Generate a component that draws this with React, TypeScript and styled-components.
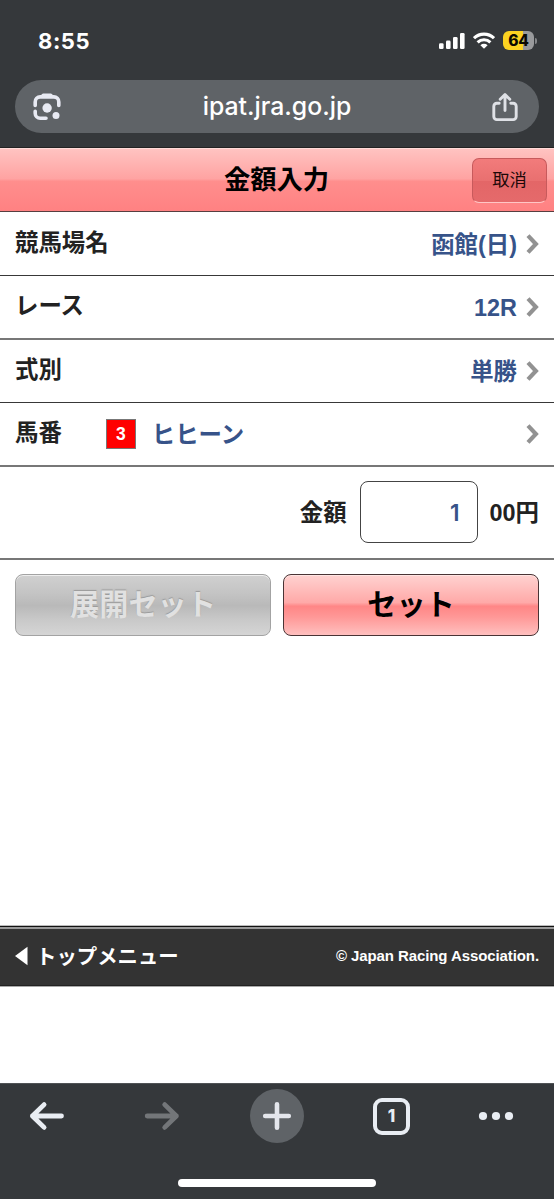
import React from "react";
import styled, { createGlobalStyle } from "styled-components";

const jp = `"Liberation Sans", "Noto Sans CJK JP", sans-serif`;
const ui = `Inter, "Noto Sans CJK JP", sans-serif`;

const GlobalStyle = createGlobalStyle`
  * { box-sizing: border-box; }
  body { margin: 0; background: #fff; font-family: ${jp}; }
`;

const Screen = styled.div`
  width: 554px;
  height: 1199px;
  display: flex;
  flex-direction: column;
  overflow: hidden;
  background: #fff;
`;

const BrowserTop = styled.header`
  height: 148px;
  flex: none;
  background: #35383b;
  border-bottom: 1px solid #222;
  padding: 0 15px;
`;

const StatusBar = styled.div`
  height: 80px;
  padding: 1px 2px 0 23px;
  display: flex;
  align-items: center;
  justify-content: space-between;
`;

const Clock = styled.span`
  font: 700 22px/28px ${ui};
  letter-spacing: 0.6px;
  color: #fff;
`;

const StatusIcons = styled.div`
  display: flex;
  align-items: center;
  gap: 8px;
  height: 20px;
`;

const Battery = styled.div`
  display: flex;
  align-items: center;
  gap: 1px;
`;

const BatteryBody = styled.div`
  width: 31px;
  height: 19px;
  border-radius: 6px;
  background: linear-gradient(90deg, #fcd321 64%, #999a9c 64%);
  font: 800 15.5px/19px ${ui};
  letter-spacing: -0.1px;
  text-align: center;
  color: #0b0a02;
`;

const BatteryTip = styled.div`
  width: 2px;
  height: 6px;
  border-radius: 0 2px 2px 0;
  background: #85878a;
`;

const AddressBar = styled.div`
  height: 53px;
  border-radius: 27px;
  background: #5f6367;
  padding: 0 19px 0 16px;
  display: flex;
  align-items: center;
  justify-content: space-between;
`;

const Url = styled.span`
  font: 500 24.8px/30px ${ui};
  letter-spacing: 0;
  color: #fff;
  padding: 0 1px 1px 2px;
`;

const TitleBar = styled.div`
  height: 64px;
  flex: none;
  display: grid;
  grid-template-columns: 1fr auto 1fr;
  align-items: center;
  background: linear-gradient(#ffc3c1 0%, #ffa3a2 48%, #ff8e8d 52%, #ff8182 100%);
  border-top: 1px solid #ffdcd9;
  border-bottom: 1px solid #573f40;
  padding-right: 7px;
`;

const Title = styled.h1`
  grid-column: 2;
  margin: 0 0 0 6px;
  font: 700 26.3px/40px ${jp};
  color: #000;
`;

const CancelButton = styled.button`
  justify-self: end;
  width: 75px;
  height: 45px;
  padding: 0 0 1px;
  border: 1px solid #c75a5c;
  border-bottom-color: #ffc6c5;
  border-radius: 7px;
  background: linear-gradient(#f27b7b 0%, #e97070 50%, #e36667 52%, #e56a6b 100%);
  font: 400 17.3px/30px ${jp};
  color: #1c0808;
`;

const Row = styled.div<{ $thick?: boolean; $height: number }>`
  height: ${(p) => p.$height}px;
  flex: none;
  display: flex;
  align-items: center;
  padding: 0 15px;
  border-bottom: ${(p) => (p.$thick ? "2px solid #777" : "1px solid #383838")};
`;

const Label = styled.span`
  font: 700 23.4px/34px ${jp};
  color: #222;
  padding-bottom: 2px;
`;

const Value = styled.span`
  margin-left: auto;
  padding-top: 2px;
  font: 700 23.4px/34px ${jp};
  color: #375389;
`;

const HorseNumber = styled.span`
  width: 30px;
  height: 30px;
  margin: 0 16px 0 44px;
  border: 1px solid #777;
  background: #f00;
  color: #fff;
  font: 700 17.5px/28px ${jp};
  text-align: center;
`;

const HorseName = styled(Value)`
  margin: 0 auto 0 0;
`;

const Chevron = styled.svg`
  width: 13px;
  height: 20px;
  margin-left: 9px;
  flex: none;
`;

const AmountRow = styled(Row)`
  justify-content: flex-end;
  padding-bottom: 2px;
`;

const AmountText = styled.span`
  font: 700 23.4px/34px ${jp};
  padding-top: 2px;
  color: #222;
`;

const AmountInput = styled.input`
  width: 118px;
  height: 62px;
  margin: 0 12px 0 13px;
  padding: 2px 17px 0 8px;
  border: 1px solid #444;
  border-radius: 8px;
  background: #fff;
  text-align: right;
  font: 600 22.5px/30px ${ui};
  color: #375389;
  outline: none;
`;

const Actions = styled.div`
  display: flex;
  gap: 12px;
  padding: 14px 15px 0;
`;

const ActionButton = styled.button<{ $muted?: boolean }>`
  flex: 1;
  height: 62px;
  padding: 0;
  border-radius: 8px;
  border: 1px solid ${(p) => (p.$muted ? "#a3a3a3" : "#4a3435")};
  background: ${(p) =>
    p.$muted
      ? "linear-gradient(#d0d0d0 0%, #c4c4c4 30%, #b9b9b9 51%, #c9c9c9 75%, #d5d5d5 100%)"
      : "linear-gradient(#ffd2d0 0%, #ffa9a8 46%, #ff8686 52%, #ff9897 70%, #ffc0bf 100%)"};
  box-shadow: inset 0 1px 0 ${(p) => (p.$muted ? "#ededed" : "#ffe5e3")};
  font: 700 29.2px/42px ${jp};
  color: ${(p) => (p.$muted ? "#e1e1e1" : "#000")};
  text-shadow: ${(p) => (p.$muted ? "0 -1px 1px #999" : "none")};
`;

const PageFooter = styled.footer`
  margin-top: auto;
  height: 62px;
  flex: none;
  display: flex;
  align-items: center;
  padding: 0 15px;
  background: linear-gradient(#bbb 1px, #111 1px 2px, #999 2px 4px, #333 4px 60px, #222 60px 61px, #aaa 61px);
  color: #fff;
`;

const MenuLink = styled.span`
  margin-left: 8px;
  padding-top: 2px;
  font: 700 20.4px/30px ${jp};
`;

const Copyright = styled.span`
  margin-left: auto;
  font: 700 15px/20px ${jp};
  letter-spacing: -0.09px;
`;

const BackTriangle = styled.svg`
  width: 13px;
  height: 20px;
`;

const BrowserBottom = styled.nav`
  height: 116px;
  flex: none;
  margin-top: 96px;
  background: #35383b;
  border-top: 1px solid #505356;
  display: flex;
  flex-direction: column;
  align-items: center;
`;

const Tools = styled.div`
  width: 554px;
  height: 64px;
  display: grid;
  grid-template-columns: 94px 136px 94px 135px 74px;
  align-items: center;
  justify-items: center;
`;

const NewTab = styled.div`
  width: 54px;
  height: 54px;
  border-radius: 50%;
  background: #5f6367;
  display: grid;
  place-items: center;
`;

const TabCount = styled.div`
  width: 37px;
  height: 37px;
  border: 4px solid #e9edf3;
  border-radius: 9px;
  font: 800 17px/29px ${ui};
  text-align: center;
  color: #e9edf3;
`;

const HomeIndicator = styled.div`
  width: 198px;
  height: 8px;
  margin-top: 31px;
  border-radius: 4px;
  background: #fff;
`;

const Arrow = () => (
  <Chevron viewBox="0 0 13 20">
    <path d="M2 1.6 9.9 10 2 18.4" fill="none" stroke="#929292" strokeWidth="4.2" />
  </Chevron>
);

const Signal = () => (
  <svg width="26" height="16" viewBox="0 0 26 16" fill="#fff">
    <rect x="0" y="10.3" width="4.6" height="5.7" rx="1.3" />
    <rect x="7" y="7.6" width="4.6" height="8.4" rx="1.3" />
    <rect x="14" y="4" width="4.6" height="12" rx="1.3" />
    <rect x="21" y="0" width="4.6" height="16" rx="1.3" />
  </svg>
);

const Wifi = () => (
  <svg width="22" height="17" viewBox="0 0 22 17" fill="none" stroke="#fff" strokeWidth="3.1">
    <path d="M1 6.2a14.4 14.4 0 0 1 20 0" />
    <path d="M4.6 10.3a9.3 9.3 0 0 1 12.8 0" />
    <path d="M11 16.8 7.4 13.3a5.2 5.2 0 0 1 7.2 0Z" fill="#fff" stroke="none" />
  </svg>
);

const Lens = () => (
  <svg width="32" height="32" viewBox="0 0 32 32" fill="none" stroke="#e8eaf3" strokeWidth="3.6">
    <path d="M4.2 14.4V10.9a5 5 0 0 1 5-5h13.6a5 5 0 0 1 5 5V14.4M4.2 20.2v2a5 5 0 0 0 5 5H15" strokeLinecap="round" />
    <path d="M8.5 6.2 10.8 3.2a2 2 0 0 1 1.6-.8h7.2a2 2 0 0 1 1.6.8l2.3 3Z" fill="#e8eaf3" stroke="none" />
    <circle cx="16.1" cy="17" r="4.7" fill="#e8eaf3" stroke="none" />
    <circle cx="25" cy="24.4" r="3.5" fill="#e8eaf3" stroke="none" />
  </svg>
);

const Share = () => (
  <svg width="30" height="30" viewBox="0 0 30 30" fill="none" stroke="#dfe1e6" strokeWidth="2.9" strokeLinecap="round" strokeLinejoin="round">
    <path d="M9.2 11.2H6.8a3 3 0 0 0-3 3v10.4a3 3 0 0 0 3 3h16.4a3 3 0 0 0 3-3V14.2a3 3 0 0 0-3-3h-2.4" />
    <path d="M15 18.6V3M10.2 7.3 15 2.6l4.8 4.7" />
  </svg>
);

const NavArrow = ({ forward }: { forward?: boolean }) => (
  <svg width="38" height="32" viewBox="0 0 38 32" fill="none" stroke={forward ? "#737679" : "#e9edf3"} strokeWidth="4.8" strokeLinecap="round" strokeLinejoin="round">
    <path d={forward ? "M4.2 16H33.4M21.7 4.6 33.4 16 21.7 27.4" : "M33.5 16H4.4M16.1 4.6 4.4 16l11.7 11.4"} />
  </svg>
);

const Plus = () => (
  <svg width="30" height="30" viewBox="0 0 30 30" stroke="#e4e6ec" strokeWidth="4.6" strokeLinecap="round">
    <path d="M15 3.2v23.6M3.2 15h23.6" />
  </svg>
);

const More = () => (
  <svg width="36" height="10" viewBox="0 0 36 10" fill="#e9edf3">
    <circle cx="5" cy="5" r="4.1" />
    <circle cx="18" cy="5" r="4.1" />
    <circle cx="31" cy="5" r="4.1" />
  </svg>
);

export default function App() {
  return (
    <Screen>
      <GlobalStyle />
      <BrowserTop>
        <StatusBar>
          <Clock>8:55</Clock>
          <StatusIcons>
            <Signal />
            <Wifi />
            <Battery>
              <BatteryBody>64</BatteryBody>
              <BatteryTip />
            </Battery>
          </StatusIcons>
        </StatusBar>
        <AddressBar>
          <Lens />
          <Url>ipat.jra.go.jp</Url>
          <Share />
        </AddressBar>
      </BrowserTop>

      <TitleBar>
        <Title>金額入力</Title>
        <CancelButton>取消</CancelButton>
      </TitleBar>

      <Row $height={64}>
        <Label>競馬場名</Label>
        <Value>函館(日)</Value>
        <Arrow />
      </Row>
      <Row $height={64} $thick>
        <Label>レース</Label>
        <Value>12R</Value>
        <Arrow />
      </Row>
      <Row $height={63}>
        <Label>式別</Label>
        <Value>単勝</Value>
        <Arrow />
      </Row>
      <Row $height={64} $thick>
        <Label>馬番</Label>
        <HorseNumber>3</HorseNumber>
        <HorseName>ヒヒーン</HorseName>
        <Arrow />
      </Row>
      <AmountRow $height={93} $thick>
        <AmountText>金額</AmountText>
        <AmountInput defaultValue="1" aria-label="金額" />
        <AmountText>00円</AmountText>
      </AmountRow>

      <Actions>
        <ActionButton $muted>展開セット</ActionButton>
        <ActionButton>セット</ActionButton>
      </Actions>

      <PageFooter>
        <BackTriangle viewBox="0 0 13 20">
          <path d="M0 10 12.5 0.8v18.4Z" fill="#fff" />
        </BackTriangle>
        <MenuLink>トップメニュー</MenuLink>
        <Copyright>© Japan Racing Association.</Copyright>
      </PageFooter>

      <BrowserBottom>
        <Tools>
          <NavArrow />
          <NavArrow forward />
          <NewTab>
            <Plus />
          </NewTab>
          <TabCount>1</TabCount>
          <More />
        </Tools>
        <HomeIndicator />
      </BrowserBottom>
    </Screen>
  );
}
